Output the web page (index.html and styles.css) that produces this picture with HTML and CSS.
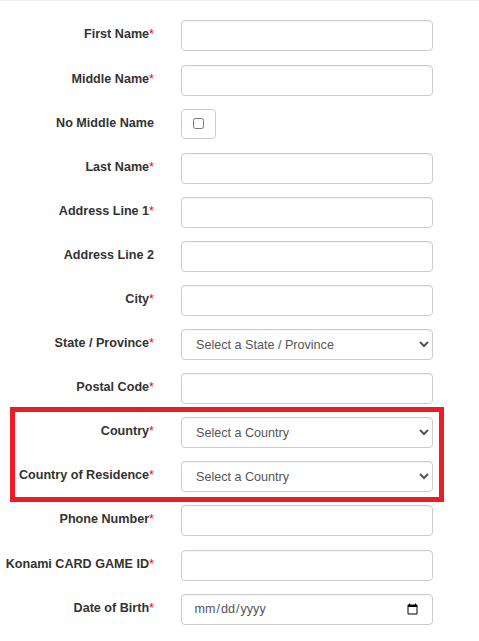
FILE: index.html
```html
<!DOCTYPE html>
<html lang="en">
<head>
<meta charset="utf-8">
<title>Registration</title>
<link rel="stylesheet" href="styles.css">
</head>
<body>
<form class="form">
  <div class="row"><label class="label">First Name<span class="req">*</span></label><input class="field" type="text"></div>
  <div class="row"><label class="label">Middle Name<span class="req">*</span></label><input class="field" type="text"></div>
  <div class="row"><label class="label">No Middle Name</label><span class="check-box"><input class="check" type="checkbox"></span></div>
  <div class="row"><label class="label">Last Name<span class="req">*</span></label><input class="field" type="text"></div>
  <div class="row"><label class="label">Address Line 1<span class="req">*</span></label><input class="field" type="text"></div>
  <div class="row"><label class="label">Address Line 2</label><input class="field" type="text"></div>
  <div class="row"><label class="label">City<span class="req">*</span></label><input class="field" type="text"></div>
  <div class="row"><label class="label">State / Province<span class="req">*</span></label><select class="field select"><option>Select a State / Province</option></select></div>
  <div class="row"><label class="label">Postal Code<span class="req">*</span></label><input class="field" type="text"></div>
  <div class="row"><label class="label">Country<span class="req">*</span></label><select class="field select"><option>Select a Country</option></select></div>
  <div class="row"><label class="label">Country of Residence<span class="req">*</span></label><select class="field select"><option>Select a Country</option></select></div>
  <div class="row"><label class="label">Phone Number<span class="req">*</span></label><input class="field" type="text"></div>
  <div class="row"><label class="label">Konami CARD GAME ID<span class="req">*</span></label><input class="field" type="text"></div>
  <div class="row"><label class="label">Date of Birth<span class="req">*</span></label><input class="field date" type="date"></div>
</form>
<div class="highlight"></div>
</body>
</html>
```
FILE: styles.css
```css
html, body {
  margin: 0;
  padding: 0;
  background: #fff;
}
body {
  position: relative;
  width: 479px;
  height: 641px;
  overflow: hidden;
  border-top: 1px solid #eee;
  box-sizing: border-box;
  font-family: "Liberation Sans", Arial, sans-serif;
  font-size: 12.6px;
  color: #333;
}
.form {
  display: flex;
  flex-direction: column;
  gap: 13.09375px;
  padding-top: 19.4375px;
}
.row {
  display: grid;
  grid-template-columns: 154px 252px;
  column-gap: 27px;
  align-items: start;
  height: 31px;
}
.label {
  padding-top: 7px;
  text-align: right;
  font-weight: 700;
  font-size: 12.6px;
  line-height: 15px;
  white-space: nowrap;
  color: #333;
}
.req {
  color: #f00;
  font-weight: 400;
}
.field {
  box-sizing: border-box;
  width: 252px;
  height: 31px;
  padding: 0 14px;
  border: 1px solid #ccc;
  border-radius: 4px;
  background: #fff;
  font-family: "Liberation Sans", Arial, sans-serif;
  font-size: 12.6px;
  color: #555;
  box-shadow: inset 0 1px 1px rgba(0,0,0,.04);
}
.select {
  padding: 0 10px;
}
.date {
  padding: 0 11.5px;
}
.check-box {
  box-sizing: border-box;
  display: flex;
  align-items: center;
  justify-content: center;
  width: 35px;
  height: 30px;
  border: 1px solid #ccc;
  border-radius: 4px;
}
.check {
  width: 11px;
  height: 11px;
  margin: 0;
}
.highlight {
  position: absolute;
  left: 10px;
  top: 406px;
  width: 434px;
  height: 95px;
  box-sizing: border-box;
  border: 5px solid #ed1c24;
}
```
